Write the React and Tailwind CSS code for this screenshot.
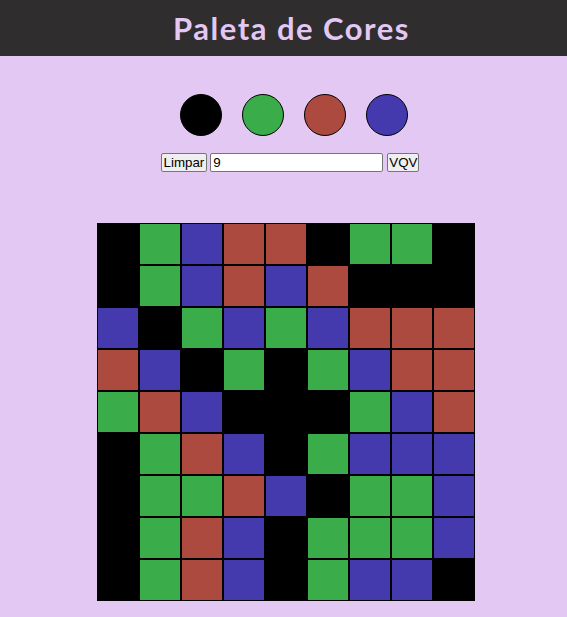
const palette = {
  k: 'bg-black',
  g: 'bg-[#3aad4a]',
  r: 'bg-[#ad4a3f]',
  b: 'bg-[#453aad]',
};

// each string is one row of the board
const board = [
  'kgbrrkggk',
  'kgbrbrkkk',
  'bkgbgbrrr',
  'rbkgkgbrr',
  'grbkkkgbr',
  'kgrbkgbbb',
  'kggrbkggb',
  'kgrbkgggb',
  'kgrbkgbbk',
];

export default function App() {
  return (
    <div className="min-h-[617px] bg-[#e2c8f2] font-['Liberation_Sans',Arial,sans-serif]">
      <header className="h-14 bg-[#2f2d2e] flex items-center justify-center">
        <h1 className="ml-[16px] text-[31px] font-bold text-[#e2c8f2] font-['Lato',sans-serif] tracking-[1.5px]">
          Paleta de Cores
        </h1>
      </header>

      {/* Palette */}
      <div className="flex justify-center pt-[38px]">
        {['k', 'g', 'r', 'b'].map((c) => (
          <div
            key={c}
            className={`ml-5 w-[42px] h-[42px] rounded-full border border-black ${palette[c]}`}
          />
        ))}
      </div>

      {/* Controls */}
      <div className="flex justify-center mt-[17px] ml-[13px] text-[13.33px]">
        <button className="h-[19px] px-[2px] leading-none bg-[#efefef] border border-[#767676] rounded-[2px] text-black">
          Limpar
        </button>
        <input
          defaultValue="9"
          className="ml-[3px] w-[173px] h-[19px] px-[2px] bg-white border border-[#767676] rounded-[2px] text-black outline-none"
        />
        <button className="ml-1 h-[19px] px-[1px] leading-none bg-[#efefef] border border-[#767676] rounded-[2px] text-black">
          VQV
        </button>
      </div>

      {/* Board */}
      <div className="flex justify-center mt-[51px] ml-[5px]">
        <div className="flex flex-col">
          {board.map((row, i) => (
            <div key={i} className="flex">
              {row.split('').map((c, j) => (
                <div key={j} className={`w-[42px] h-[42px] border border-black ${palette[c]}`} />
              ))}
            </div>
          ))}
        </div>
      </div>
    </div>
  );
}
